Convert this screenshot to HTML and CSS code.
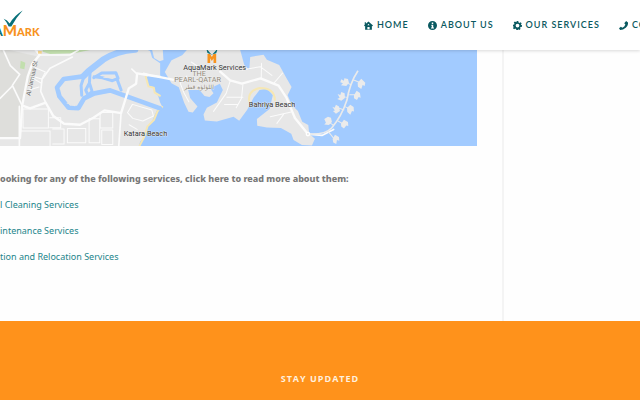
FILE: index.html
```html
<!DOCTYPE html>
<html lang="en">
<head>
<meta charset="utf-8">
<title>AquaMark</title>
<link rel="stylesheet" href="styles.css">
</head>
<body>
<header class="site-header">
  <a class="logo" href="#">
    <svg class="logo-tick" viewBox="0 0 60 50" aria-hidden="true"><path d="M2 26 Q13 30 20 40 Q34 16 59 1 Q38 24 25 49 L17 49 Q12 36 2 26Z"/></svg>
    <span class="logo-text"><span class="logo-aqua">A</span><span class="logo-m">M</span><span class="logo-rest">ARK</span></span>
  </a>
  <nav class="nav">
    <a href="#"><svg viewBox="0 0 24 24"><path fill-rule="evenodd" d="M12 1 5 7V3H2v7L0 12l2 2 1-1v10h18V13l1 1 2-2ZM9 22v-6h6v6ZM12 7l3 4H9Z"/></svg>HOME</a>
    <a href="#"><svg viewBox="0 0 24 24"><path fill-rule="evenodd" d="M12 0a12 12 0 1 0 0 24 12 12 0 0 0 0-24ZM10 4h4v4h-4ZM9 10h5v7h2v3H8v-3h2v-4H9Z"/></svg>ABOUT US</a>
    <a href="#"><svg viewBox="0 0 24 24"><path fill-rule="evenodd" d="M10 0h4l1 4 2 1 3-2 3 3-2 4 3 1v4l-4 1-1 2 1 3-3 3-3-2-1 2h-4l-1-3-2-1-3 2-3-3 2-4-2-1v-4l3-1 1-2-2-3 3-3 4 2ZM12 7a5 5 0 1 0 0 10 5 5 0 0 0 0-10Z"/></svg>OUR SERVICES</a>
    <a href="#"><svg viewBox="0 0 24 24"><path d="M19 0l5 4q1 8-6 14T3 24l-3-5 5-4 4 3q6-3 8-9l-3-3Z"/></svg>CO</a>
  </nav>
</header>
<main class="page">
  <article class="content">
    <svg class="map" viewBox="0 15 1431 288" role="img" aria-label="Map">
      <rect class="water" y="15" width="1431" height="288"/>
      <g class="land">
        <path d="M0 0H408L450 18 456 38 480 55V92L446 91 437 100 446 122 462 127 464 142 474 152 480 172 487 186 470 196 458 224 440 248 434 275 420 290 416 303H0Z"/>
        <path d="M456 15l6 24 16 10 12-4-2-30Z"/>
        <path d="M560 15 546 31 514 46 494 81 514 115 536 127 552 173 565 200 578 202 592 184 570 159 564 135 598 135 613 153 628 156 640 145 630 130 659 116 668 135 650 172 620 188 610 208 614 226 650 229 700 215 717 227 741 194 760 158 778 135 800 131 818 150 808 192 770 222 771 242 800 247 842 249 873 266 880 285 905 300 935 301 944 281 927 266 924 240 906 230 893 198 875 180 862 151 874 126 858 98 837 60 800 44 790 29 750 36 747 75 732 59 720 15Z"/>
        <path d="M678 31l15-5 18 14-4 18-17-1-13-12Z"/>
      </g>
      <path class="grey" d="M0 15H28L110 34 66 184 58 280H0Z"/>
      <path class="park" d="M128 15H270L222 25 150 27 128 20ZM62 47l14 6-3 20-13-3Z"/>
      <path class="sand" d="M437 95l8 29 16 4 3 15 15 9M486 186l-14 13-10 25-20 20-10 32-13 25M747 168q-5-31 32-39 44 0 45 36"/>
      <g class="canal">
        <path stroke-width="19" d="M405 14Q350 18 309 44L265 79 250 94"/>
        <path stroke-width="14" d="M250 94 191 102 171 127 178 154 206 188 235 189 252 160 283 145 330 136 480 190"/>
        <path stroke-width="9" d="M252 93 243 121 245 151M270 82 268 114 257 135 264 151 276 139 269 117M281 98 305 84 347 83 354 100 337 107 307 98 282 95M351 103 363 135"/>
      </g>
      <path class="isle" d="M180 132l22-13M201 174l24 8M311 97l25 2"/>
      <g class="road">
        <path stroke-width="7" d="M0 279H60L66 184 83 95 96 58 119 29 107 15M66 181 90 190 137 173 160 213 192 236 240 239 280 218 313 196 363 204 386 130 408 116 411 85 480 96 518 104M660 80 690 106 725 116 781 100 835 122 858 157 884 219 923 267"/>
        <path stroke-width="5" d="M10 15 31 62 59 88 37 121 66 181M0 160 37 123M119 30H210L235 15M137 173 122 139 126 103 150 70 217 36M58 184V303M363 203 356 303M411 87 395 72M430 85 454 91 480 95M923 267 965 271 1000 253"/>
        <path stroke-width="3" d="M106 68 136 81 125 102 97 94M94 97 123 114M87 135 117 126M69 192H145V249H69ZM149 218h33v30h-33M202 250h55v43h-55ZM267 221h32v72h-32ZM300 202h38v47h-38ZM305 255h33v43h-33ZM60 258H150V303M158 252h34v45h-34M382 203l15-25 58 17 5 18-32 15-30-8ZM387 239l24 14M560 93 540 114 552 145 566 170M605 72 573 51M690 108 678 145 640 199M728 119 724 160 708 188M680 157h48M673 178h40M725 75 780 65 815 91M783 99 784 55M820 116 847 84M810 215 873 201M830 235 850 208"/>
      </g>
      <g class="palm">
        <path stroke-width="5" d="M923 267Q975 270 994 249 1024 214 1040 165 1048 115 1073 77"/>
        <path stroke-width="3" d="M1058 104l23 9M1047 149h25M1032 184l20 9M1013 228l20 11M983 258l20 25M1053 119l-18-7M1041 157l-18-3M1032 195l-20-7M1000 241l-19-13"/>
        <g>
          <path d="M1023 103l8 4 1-7 11 2 3 11-8 10-16-2 6-6-8-3ZM1072 113l11-12 12 12-2 10-6-3-4 12-10-7ZM1012 147l8 3 3-9 10 4 1 14-11 8-12-5 7-4ZM1061 151l8-14 10 7 2 14-6-2-5 9-9-5ZM996 185l7 3 4-9 9 5 3 14-12 8-9-8 6-2ZM1040 189l10-10 10 7 1 13-6-1-5 11-9-8ZM972 222l11-7 9 3 3 13-9 9-14-2 5-5ZM1022 236l9-12 12 7 1 12-6-2-7 9-8-6ZM997 282l7-13 12 7 1 11-7-2-2 12-9-5Z"/>
        </g>
      </g>
      <circle class="stop" cx="923" cy="267" r="5"/>
      <rect class="marker" x="114" y="18" width="11" height="8"/>
      <g class="pin"><path class="pin-m" d="M622 54V27h8l5 9 5-9h8v27h-8V40l-5 8-5-8v14Z"/><path class="pin-v" d="M618 10l17 20 18-20-5 15-10 3-6 0-10-4Z"/></g>
      <g class="label">
        <text class="area" x="576" y="94">THE</text>
        <text class="area" x="522" y="112">PEARL-QATAR</text>
        <text class="area arabic" x="552" y="131">اللؤلؤة قطر</text>
        <text x="549" y="75">AquaMark Services</text>
        <text x="371" y="273">Katara Beach</text>
        <text x="746" y="185">Bahriya Beach</text>
        <text class="street" transform="translate(91 153) rotate(-78)">Al Jamiaa St</text>
      </g>
    </svg>
    <div class="copy">
      <p class="lead">ooking for any of the following services, click here to read more about them:</p>
      <p><a href="#">l Cleaning Services</a></p>
      <p><a href="#">intenance Services</a></p>
      <p><a href="#">tion and Relocation Services</a></p>
    </div>
  </article>
  <aside class="sidebar"></aside>
</main>
<footer class="footer"><h2>STAY UPDATED</h2></footer>
</body>
</html>
```

FILE: styles.css
```css
* { box-sizing: border-box; }
body {
  margin: 0;
  overflow-x: hidden;
  background: #fefefe;
  color: #777;
  font: 9px/26px "Noto Sans", "Open Sans", sans-serif;
}
a { text-decoration: none; color: #23858b; }
.site-header {
  position: relative;
  display: flex;
  justify-content: space-between;
  align-items: center;
  height: 50px;
  background: #fff;
  box-shadow: 0 1px 3px rgba(0, 0, 0, .15);
}
.logo { display: flex; flex-direction: column; }
.logo-tick { width: 20px; height: 17px; margin-left: 3px; fill: #087079; }
.logo-text {
  display: flex;
  align-items: baseline;
  margin: -5px 0 0 -5px;
  color: #f7931e;
  font: 900 11px/16px Lato, sans-serif;
}
.logo-aqua { color: #087079; }
.logo-m { font-size: 15px; }
.nav { display: flex; gap: 19px; white-space: nowrap; margin-right: -7px; }
.nav a {
  display: flex;
  align-items: center;
  gap: 4px;
  color: #0a5960;
  font: 600 9px/16px Lato, sans-serif;
  letter-spacing: 1px;
}
.nav svg { width: 9px; height: 9px; fill: currentColor; }
.page { display: flex; min-height: 271px; }
.content { flex: 1; min-width: 0; }
.sidebar { width: 21.5%; border-left: 2px solid #f4f4f4; }
.map { display: block; width: calc(100% - 25px); }
.copy { padding-top: 20px; white-space: nowrap; }
.copy p { margin: 0; }
.lead { font-weight: 800; }
.footer { min-height: 79px; padding-top: 50px; background: #ff921b; }
.footer h2 {
  margin: 0;
  color: #fff0df;
  font: 700 9px/16px "Open Sans", sans-serif;
  letter-spacing: 1px;
  text-align: center;
}
.water { fill: #a2cbff; }
.land { fill: #e7e7e7; }
.grey { fill: #dededb; }
.park { fill: #c2dfae; }
.sand, .canal, .road, .isle { fill: none; stroke-linejoin: round; stroke-linecap: round; }
.sand { stroke: #f6e7b4; stroke-width: 6px; }
.canal { stroke: #a2cbff; }
.isle { stroke: #e7e7e7; stroke-width: 3px; }
.road { stroke: #fbfbfb; }
.palm > path { fill: none; stroke: #ebebeb; }
.palm g { fill: #ebebeb; }
.stop { fill: #e7e7e7; stroke: #fff; stroke-width: 4px; }
.marker { fill: #f8d68c; }
.pin-m { fill: #f7931e; }
.pin-v { fill: #087079; }
.label text {
  fill: #333;
  stroke: #f4f4f4;
  stroke-width: 2px;
  paint-order: stroke;
  font: 22px Roboto, sans-serif;
}
.label .area { fill: #8f8878; font-size: 22px; }
.label .arabic { font-family: "DejaVu Sans", sans-serif; font-size: 18px; }
.label .street { fill: #666; font-size: 19px; }
```
